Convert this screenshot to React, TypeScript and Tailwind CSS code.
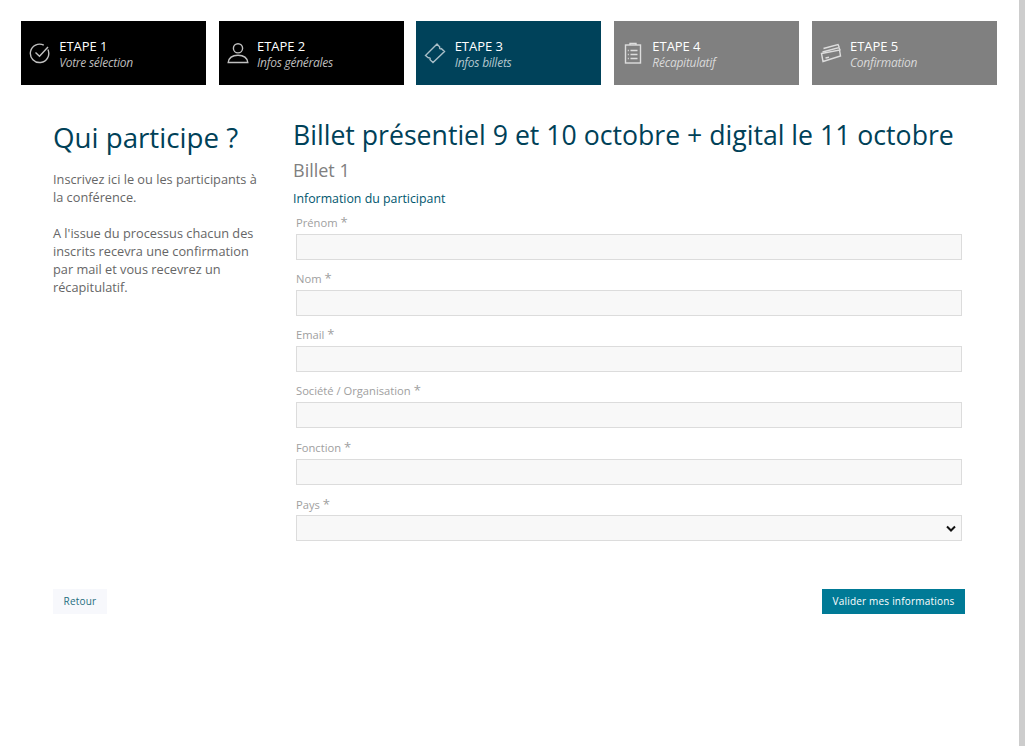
const steps = [
  { title: "ETAPE 1", sub: "Votre sélection", bg: "bg-black", subColor: "text-[#bdbdbd]", icon: "check", stroke: "#c0c0c0" },
  { title: "ETAPE 2", sub: "Infos générales", bg: "bg-black", subColor: "text-[#bdbdbd]", icon: "user", stroke: "#c0c0c0" },
  { title: "ETAPE 3", sub: "Infos billets", bg: "bg-[#00425a]", subColor: "text-[#b3c6cd]", icon: "ticket", stroke: "#a9bfc8" },
  { title: "ETAPE 4", sub: "Récapitulatif", bg: "bg-[#808080]", subColor: "text-[#d9d9d9]", icon: "list", stroke: "#dddddd" },
  { title: "ETAPE 5", sub: "Confirmation", bg: "bg-[#808080]", subColor: "text-[#d9d9d9]", icon: "tickets", stroke: "#dddddd" },
];

const fields = ["Prénom", "Nom", "Email", "Société / Organisation", "Fonction"];

function StepIcon({ name, stroke }: { name: string; stroke: string }) {
  const common = { fill: "none", stroke, strokeWidth: 1.4, viewBox: "0 0 22 22", className: "w-[22px] h-[22px] shrink-0" };
  if (name === "check")
    return (
      <svg {...common}>
        <path d="M18.900 7.500A9.200 9.200 0 1 1 14.800 3.200" />
        <path d="M6.500 10.500l4 3.800L19 5" />
      </svg>
    );
  if (name === "user")
    return (
      <svg {...common}>
        <circle cx="11" cy="6.300" r="4.600" />
        <path d="M1.200 20.500c.6-5 3.800-7.300 9.800-7.300s9.200 2.300 9.800 7.300z" />
      </svg>
    );
  if (name === "ticket")
    return (
      <svg {...common}>
        <path d="M1.500 13.500L13 2l2.800 3c-.7 1.400.3 2.300 1.600 1.700L20.500 9.500 9 20.500l-3-2.800c.7-1.500-.4-2.500-1.800-1.900z" />
      </svg>
    );
  if (name === "list")
    return (
      <svg {...common}>
        <rect x="3.500" y="3" width="15" height="18" />
        <path d="M8 3V1.500h6V3M8.500 8.500h7M8.500 12.500h7M8.500 16.500h7M5.800 8.500h1M5.800 12.500h1M5.800 16.500h1" />
      </svg>
    );
  return (
    <svg {...common}>
      <path d="M3.500 6.500L18 2.500l1.200 2.800M2.500 10l16.500-4.500 1.200 3" />
      <path d="M1.500 11.500l18-3.500 1 6L3 19.500z" />
      <path d="M5.500 16l3.500-.8" />
    </svg>
  );
}

export default function App() {
  return (
    <div className="flex h-[746px] overflow-hidden bg-white font-['Open_Sans',sans-serif]">
      <div className="flex-1 min-w-0">
        {/* Steps */}
        <div className="flex gap-[12.700px] pl-[21px] pt-[21px]">
          {steps.map((s) => (
            <div key={s.title} className={`flex items-center gap-[8.300px] w-[185px] h-[64px] pl-[8px] ${s.bg}`}>
              <StepIcon name={s.icon} stroke={s.stroke} />
              <div className="pt-[2px]">
                <div className="text-[13px] leading-[18px] tracking-[-0.05px] text-white">{s.title}</div>
                <div className={`text-[12px] leading-[16px] tracking-[-0.25px] italic ${s.subColor}`}>{s.sub}</div>
              </div>
            </div>
          ))}
        </div>

        <div className="flex pl-[53px] pt-[33px]">
          {/* Left */}
          <div className="w-[240px] shrink-0">
            <h1 className="text-[27.700px] leading-[39px] text-[#004158]">Qui participe ?</h1>
            <div className="mt-[13px] w-[208px] text-[12.750px] leading-[18px] text-[#666666]">
              <p>Inscrivez ici le ou les participants à la conférence.</p>
              <p className="mt-[18px]">A l'issue du processus chacun des inscrits recevra une confirmation par mail et vous recevrez un récapitulatif.</p>
            </div>
          </div>

          {/* Form */}
          <div className="w-[672px] shrink-0">
            <h2 className="text-[26.650px] leading-[34px] whitespace-nowrap text-[#004158]">Billet présentiel 9 et 10 octobre + digital le 11 octobre</h2>
            <h3 className="mt-[5px] text-[18px] leading-[26px] text-[#808080]">Billet 1</h3>
            <div className="mt-[7px] text-[12.350px] leading-[18px] text-[#00566e]">Information du participant</div>
            <div className="flex flex-col gap-[10.300px] mt-[5.500px] px-[3px]">
              {fields.map((f) => (
                <div key={f}>
                  <label className="block text-[11.200px] leading-[18px] text-[#a0a0a0]">
                    {f} <span className="text-[13px] leading-[14px]">*</span>
                  </label>
                  <input className="block mt-[2px] w-full h-[26px] border border-[#dcdcdc] bg-[#f8f8f8]" />
                </div>
              ))}
              <div>
                <label className="block pt-[1px] -mb-[1px] text-[11.200px] leading-[18px] text-[#a0a0a0]">
                  Pays <span className="text-[13px] leading-[14px]">*</span>
                </label>
                <div className="relative mt-[2px] h-[26px] border border-[#dcdcdc] bg-[#f8f8f8]">
                  <svg viewBox="0 0 10 6" className="absolute right-[5px] top-[9px] w-[10px] h-[7px]" fill="none" stroke="#111111" strokeWidth="2">
                    <path d="M1 1l4 4 4-4" />
                  </svg>
                </div>
              </div>
            </div>
          </div>
        </div>

        {/* Buttons */}
        <div className="flex justify-between items-center pl-[53px] pr-[54px] mt-[48px]">
          <button className="w-[54px] h-[25px] bg-[#f7f8fc] text-[10px] tracking-[0.2px] text-[#1f6e80]">Retour</button>
          <button className="w-[143px] h-[25px] bg-[#007a96] text-[10px] font-medium tracking-[0.2px] text-white">Valider mes informations</button>
        </div>
      </div>
      <div className="w-[6px] shrink-0 bg-[#cdcdcd]" />
    </div>
  );
}
